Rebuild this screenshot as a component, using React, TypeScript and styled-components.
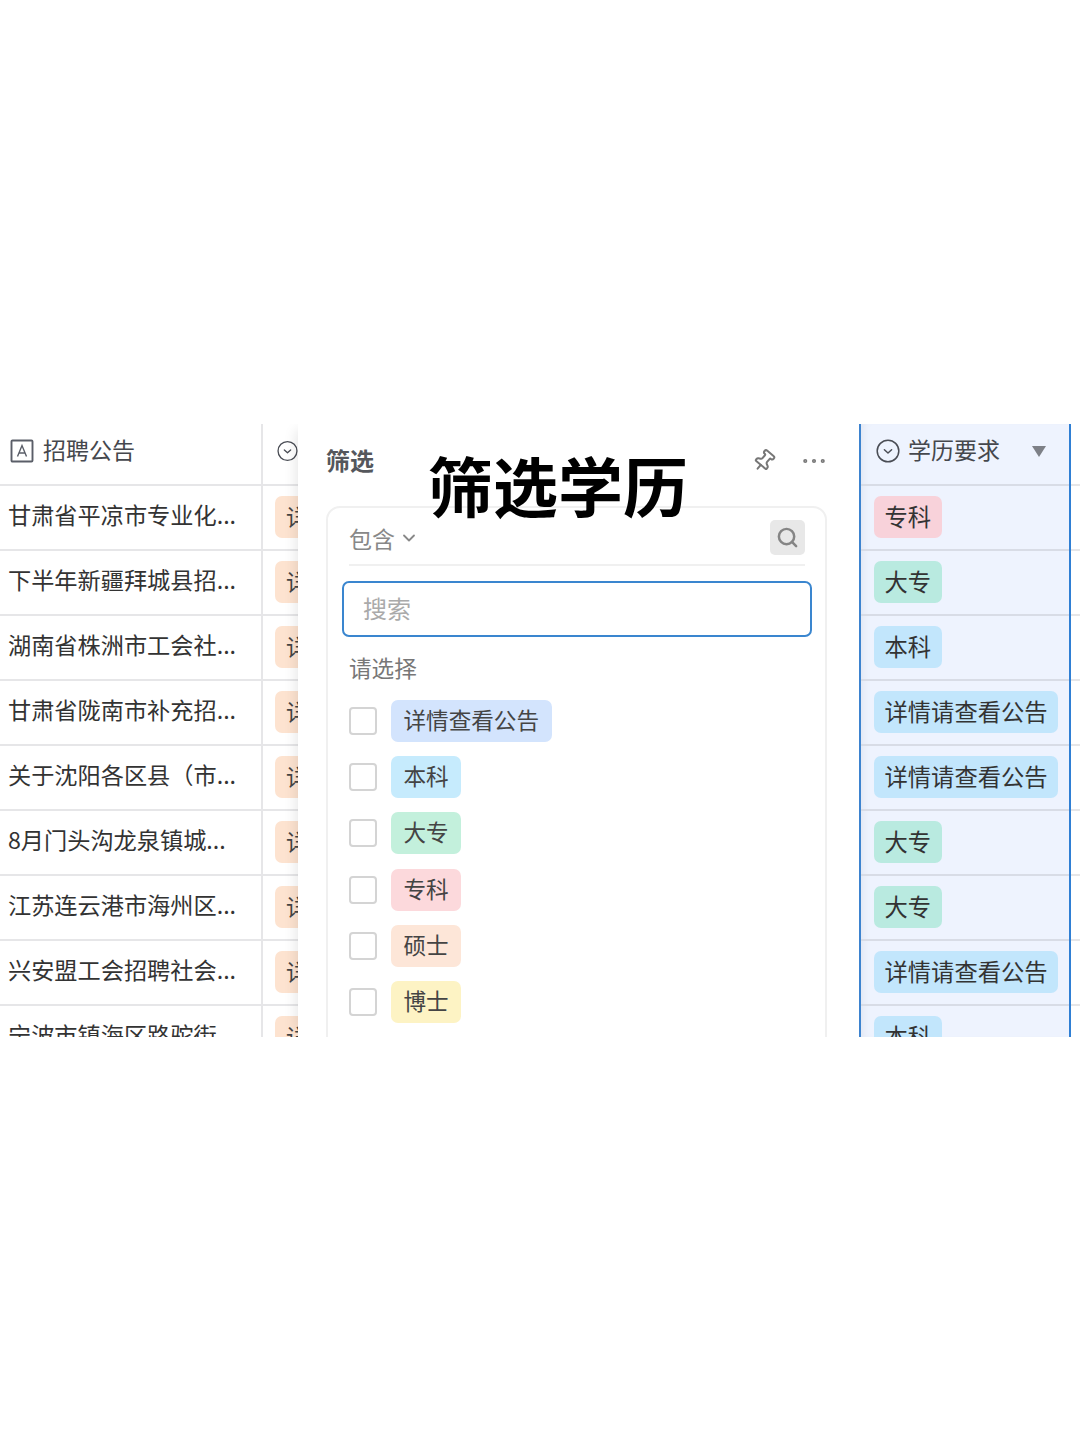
import React, { FC } from "react";
import styled, { createGlobalStyle } from "styled-components";
import { ChevronDown, Ellipsis, Pin, Search } from "lucide-react";

const GlobalStyle = createGlobalStyle`
  html, body {
    margin: 0;
    padding: 0;
    background: #fff;
  }
  body {
    font-family: "Noto Sans CJK SC", "Noto Sans", sans-serif;
    color: #333;
  }
`;

const notices = [
  "甘肃省平凉市专业化...",
  "下半年新疆拜城县招...",
  "湖南省株洲市工会社...",
  "甘肃省陇南市补充招...",
  "关于沈阳各区县（市...",
  "8月门头沟龙泉镇城...",
  "江苏连云港市海州区...",
  "兴安盟工会招聘社会...",
  "宁波市镇海区路驼街...",
];

type TagColor = "blue" | "sky" | "green" | "pink" | "peach" | "yellow";

const tagColors: Record<TagColor, string> = {
  blue: "#d3e4fd",
  sky: "#c6ebfd",
  green: "#c3f0dc",
  pink: "#fcd9dc",
  peach: "#fde6d8",
  yellow: "#fdf3c4",
};

const options: { label: string; color: TagColor }[] = [
  { label: "详情查看公告", color: "blue" },
  { label: "本科", color: "sky" },
  { label: "大专", color: "green" },
  { label: "专科", color: "pink" },
  { label: "硕士", color: "peach" },
  { label: "博士", color: "yellow" },
];

const educationRows: { label: string; bg: string }[] = [
  { label: "专科", bg: "#f8d2da" },
  { label: "大专", bg: "#b9eae0" },
  { label: "本科", bg: "#c2e6fc" },
  { label: "详情请查看公告", bg: "#c2e6fc" },
  { label: "详情请查看公告", bg: "#c2e6fc" },
  { label: "大专", bg: "#b9eae0" },
  { label: "大专", bg: "#b9eae0" },
  { label: "详情请查看公告", bg: "#c2e6fc" },
  { label: "本科", bg: "#c2e6fc" },
];

const CircleChevron: FC = () => (
  <svg width="24" height="24" viewBox="0 0 24 24" fill="none" stroke="#4a4d55" strokeWidth="1.5">
    <circle cx="12" cy="12" r="10.8" />
    <path d="M8.4 10.8 12 14l3.6-3.2" strokeLinecap="round" strokeLinejoin="round" />
  </svg>
);

const TextFieldIcon: FC = () => (
  <svg width="24" height="24" viewBox="0 0 24 24" fill="none" stroke="#5a5e68">
    <rect x="1.5" y="1.5" width="21" height="21" rx="1" strokeWidth="1.9" />
    <path d="M7.5 17.5 12 6.5l4.5 11M9 14h6" strokeWidth="1.4" />
  </svg>
);

const App: FC = () => {
  return (
    <>
      <GlobalStyle />
      <Page>
        <Stage>
          <NoticeColumn>
            <HeaderRow>
              <HeaderNameCell>
                <TextFieldIcon />
                <HeaderLabel>招聘公告</HeaderLabel>
              </HeaderNameCell>
              <HeaderPeekCell>
                <CircleChevron />
              </HeaderPeekCell>
            </HeaderRow>
            {notices.map((notice) => (
              <BodyRow key={notice}>
                <NameCell>
                  <NoticeText>{notice}</NoticeText>
                </NameCell>
                <PeekCell>
                  <PeekTag>详情</PeekTag>
                </PeekCell>
              </BodyRow>
            ))}
          </NoticeColumn>

          <FilterPanel>
            <PanelHeader>
              <PanelTitle>筛选</PanelTitle>
              <PanelActions>
                <PinIcon size={24} strokeWidth={2} />
                <Ellipsis size={30} strokeWidth={1.3} color="#777" />
              </PanelActions>
            </PanelHeader>
            <FilterCard>
              <ModeRow>
                <ModeSelect>
                  包含
                  <ChevronDown size={20} strokeWidth={2.2} color="#888" />
                </ModeSelect>
                <SearchButton>
                  <Search size={23} strokeWidth={2.6} color="#858585" />
                </SearchButton>
              </ModeRow>
              <SearchInput>搜索</SearchInput>
              <Hint>请选择</Hint>
              <OptionList>
                {options.map((option) => (
                  <OptionRow key={option.label}>
                    <CheckBox />
                    <OptionTag $color={option.color}>{option.label}</OptionTag>
                  </OptionRow>
                ))}
              </OptionList>
            </FilterCard>
          </FilterPanel>

          <EducationColumn>
            <EducationHeader>
              <CircleChevron />
              <HeaderLabel>学历要求</HeaderLabel>
              <SortArrow />
            </EducationHeader>
            {educationRows.map((row, index) => (
              <EducationRow key={index}>
                <EducationTag $bg={row.bg}>{row.label}</EducationTag>
              </EducationRow>
            ))}
          </EducationColumn>

          <RowEdge>
            <EdgeHeader />
            {educationRows.map((_, index) => (
              <EdgeRow key={index} />
            ))}
          </RowEdge>

          <Caption>筛选学历</Caption>
        </Stage>
      </Page>
    </>
  );
};

export default App;

const Page = styled.div`
  width: 1080px;
  height: 1440px;
  padding-top: 424px;
  box-sizing: border-box;
  background: #fff;
  overflow: hidden;
`;

const Stage = styled.div`
  position: relative;
  display: flex;
  height: 613px;
  overflow: hidden;
`;

const NoticeColumn = styled.div`
  width: 298px;
  flex-shrink: 0;
  overflow: hidden;
`;

const HeaderRow = styled.div`
  display: flex;
  height: 62px;
  box-sizing: border-box;
  border-bottom: 2px solid #e6e6e8;
`;

const BodyRow = styled(HeaderRow)`
  height: 65px;
`;

const NameCell = styled.div`
  width: 263px;
  flex-shrink: 0;
  box-sizing: border-box;
  display: flex;
  align-items: center;
  gap: 9px;
  padding: 0 0 2px 9px;
  border-right: 2px solid #e6e6e8;
`;

const HeaderNameCell = styled(NameCell)`
  padding: 0 0 6px 10px;
`;

const PeekCell = styled.div`
  flex: 1;
  min-width: 0;
  display: flex;
  align-items: center;
  padding: 0 0 2px 12px;
  overflow: hidden;
  white-space: nowrap;
`;

const HeaderPeekCell = styled(PeekCell)`
  padding: 0 0 6px 14px;
`;

const HeaderLabel = styled.span`
  font-size: 23px;
  line-height: 32px;
  padding-bottom: 4px;
  color: #45474d;
  white-space: nowrap;
`;

const NoticeText = styled.span`
  font-size: 23.2px;
  line-height: 32px;
  padding-bottom: 6px;
  color: #333;
  white-space: nowrap;
  margin-left: -1px;
`;

const PeekTag = styled.span`
  flex-shrink: 0;
  height: 42px;
  line-height: 40px;
  padding: 0 11px;
  font-size: 23px;
  border-radius: 7px;
  background: #fde3d0;
  color: #444;
`;

const FilterPanel = styled.div`
  position: relative;
  z-index: 1;
  width: 561px;
  flex-shrink: 0;
  box-sizing: border-box;
  padding: 0 32px 0 28px;
  background: #fff;
  box-shadow: -8px 0 12px -6px rgba(0, 0, 0, 0.1);
`;

const PanelHeader = styled.div`
  height: 82px;
  display: flex;
  align-items: center;
  justify-content: space-between;
  padding-bottom: 8px;
  box-sizing: border-box;
`;

const PanelTitle = styled.div`
  font-size: 24px;
  line-height: 32px;
  font-weight: 700;
  color: #55575c;
  margin-bottom: 3px;
`;

const PanelActions = styled.div`
  display: flex;
  align-items: center;
  gap: 23px;
  margin-right: -2px;
`;

const PinIcon = styled(Pin)`
  color: #777;
  transform: rotate(40deg);
`;

const FilterCard = styled.div`
  width: 501px;
  height: 560px;
  box-sizing: border-box;
  padding: 12px 13px 0 14px;
  border: 2px solid #f0f0f0;
  border-radius: 14px;
`;

const ModeRow = styled.div`
  display: flex;
  align-items: center;
  justify-content: space-between;
  height: 46px;
  margin: 0 7px;
  box-sizing: border-box;
  padding-bottom: 9px;
  border-bottom: 2px solid #f0f0f0;
`;

const ModeSelect = styled.div`
  display: flex;
  align-items: center;
  gap: 4px;
  font-size: 23px;
  line-height: 32px;
  color: #888;
`;

const SearchButton = styled.div`
  width: 35px;
  height: 35px;
  display: flex;
  align-items: center;
  justify-content: center;
  border-radius: 5px;
  background: #e8e8e8;
`;

const SearchInput = styled.div`
  height: 56px;
  margin-top: 15px;
  box-sizing: border-box;
  padding: 0 0 4px 19px;
  display: flex;
  align-items: center;
  border: 2px solid #3a86cf;
  border-radius: 7px;
  font-size: 24px;
  color: #aaa;
`;

const Hint = styled.div`
  margin: 14px 0 0 7px;
  font-size: 22.6px;
  line-height: 34px;
  color: #777;
`;

const OptionList = styled.div`
  display: flex;
  flex-direction: column;
  gap: 14.2px;
  margin: 15px 0 0 7px;
`;

const OptionRow = styled.div`
  display: flex;
  align-items: center;
  gap: 14px;
`;

const CheckBox = styled.span`
  width: 28px;
  height: 28px;
  box-sizing: border-box;
  border: 2px solid #d4d4d4;
  border-radius: 4px;
  background: #fff;
`;

const OptionTag = styled.span<{ $color: TagColor }>`
  height: 42px;
  line-height: 39px;
  padding: 0 12.5px;
  font-size: 22.6px;
  border-radius: 7px;
  background: ${({ $color }) => tagColors[$color]};
  color: #444;
`;

const EducationColumn = styled.div`
  width: 212px;
  flex-shrink: 0;
  box-sizing: border-box;
  border-left: 2px solid #3d83cf;
  border-right: 2px solid #2f7fd4;
  background: #eef3fe;
  box-shadow: inset 8px 0 10px -6px rgba(0, 0, 0, 0.06);
`;

const EducationHeader = styled.div`
  height: 62px;
  box-sizing: border-box;
  display: flex;
  align-items: center;
  gap: 8px;
  padding: 0 23px 6px 15px;
  border-bottom: 2px solid #d8dce6;
`;

const SortArrow = styled.span`
  margin-left: auto;
  width: 0;
  height: 0;
  border-left: 7px solid transparent;
  border-right: 7px solid transparent;
  border-top: 11px solid #7d8087;
`;

const EducationRow = styled.div`
  height: 65px;
  box-sizing: border-box;
  display: flex;
  align-items: center;
  padding: 0 0 2px 13px;
  border-bottom: 2px solid #d8dce6;
`;

const EducationTag = styled.span<{ $bg: string }>`
  height: 42px;
  line-height: 40px;
  padding: 0 10.5px;
  font-size: 23.3px;
  border-radius: 7px;
  white-space: nowrap;
  background: ${({ $bg }) => $bg};
  color: #333;
`;

const RowEdge = styled.div`
  flex: 1;
`;

const EdgeHeader = styled.div`
  height: 62px;
  box-sizing: border-box;
  border-bottom: 2px solid #e6e6e8;
`;

const EdgeRow = styled(EdgeHeader)`
  height: 65px;
`;

const Caption = styled.div`
  position: absolute;
  z-index: 2;
  left: 428px;
  top: 18px;
  font-size: 65px;
  line-height: 84px;
  font-weight: 700;
  color: #000;
  white-space: nowrap;
`;
